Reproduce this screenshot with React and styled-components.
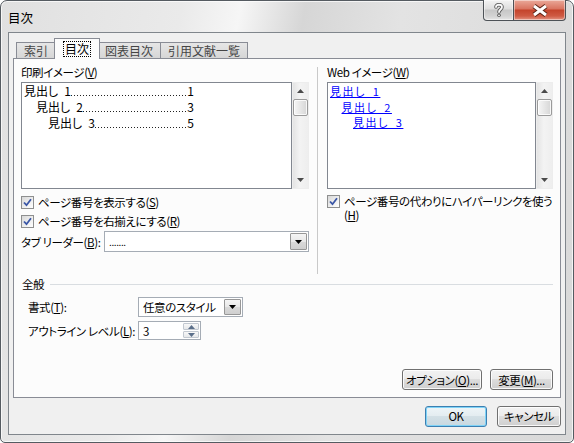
import React from "react";
import styled, { createGlobalStyle } from "styled-components";

const GlobalStyle = createGlobalStyle`
  html, body {
    margin: 0;
    padding: 0;
    background: #ffffff;
  }
  body {
    font-family: "Noto Sans CJK JP", "Liberation Sans", sans-serif;
    font-size: 11.5px;
    letter-spacing: -0.4px;
    color: #000;
  }
  * {
    box-sizing: border-box;
  }
`;

// ウィンドウ枠
const Window = styled.div`
  width: 574px;
  height: 443px;
  display: flex;
  flex-direction: column;
  padding: 0 7px 7px;
  border: 1px solid #555b61;
  border-radius: 7px 7px 5px 5px;
  background: linear-gradient(
    100deg,
    #e0e0e0 0%,
    #eaeaea 28%,
    #f6f6f6 37%,
    #d6d6d6 47%,
    #e3e3e3 62%,
    #d8d8d8 100%
  );
  box-shadow: inset 0 0 0 1px rgba(255, 255, 255, 0.7);
  font-feature-settings: "palt";
`;

const TitleBar = styled.div`
  height: 32px;
  display: flex;
  justify-content: space-between;
  align-items: flex-start;
`;

const Title = styled.span`
  margin-top: 10px;
  font-size: 12.5px;
  letter-spacing: 0;
  line-height: 14px;
`;

const CaptionButtons = styled.div`
  display: flex;
  margin-top: -1px;
`;

const CaptionButton = styled.div`
  width: ${(p) => p.$w}px;
  height: 21px;
  display: flex;
  align-items: center;
  justify-content: center;
  border: 1px solid #4d5257;
  border-top: none;
  border-left: ${(p) => (p.$close ? "none" : "1px solid #4d5257")};
  border-radius: ${(p) => (p.$close ? "0 0 4px 0" : "0 0 0 4px")};
  background: ${(p) =>
    p.$close
      ? "linear-gradient(#eaa99a 0%, #d9735f 45%, #c4432b 50%, #cf5a43 80%, #e49584 100%)"
      : "linear-gradient(#f3f3f3 0%, #dedede 45%, #c7c7c7 50%, #d3d3d3 80%, #e6e6e6 100%)"};
  box-shadow: inset 0 0 0 1px rgba(255, 255, 255, 0.45);
`;

// クライアント領域
const Client = styled.div`
  flex: 1;
  display: flex;
  flex-direction: column;
  background: #f0f0f0;
  border: 1px solid #80868c;
  padding: 0 4px;
`;

const TabStrip = styled.div`
  height: 25px;
  display: flex;
  align-items: flex-end;
  padding-left: 3px;
  position: relative;
  z-index: 1;
`;

const Tab = styled.div`
  height: ${(p) => (p.$active ? 21 : 16)}px;
  padding: ${(p) => (p.$active ? "0 9px" : "0 7px")};
  margin: ${(p) => (p.$active ? "0 -2px -1px -2px" : "0 0 0 -1px")};
  display: flex;
  align-items: center;
  border: 1px solid #898c95;
  border-bottom: none;
  background: ${(p) =>
    p.$active ? "#fcfcfc" : "linear-gradient(#e6e6e6, #d6d6d6)"};
  color: ${(p) => (p.$active ? "#000" : "#454545")};
  position: relative;
  z-index: ${(p) => (p.$active ? 2 : 0)};
  font-size: 12px;
  letter-spacing: 0;
  line-height: 14px;
  &:first-child {
    margin-left: 0;
  }
`;

const FocusText = styled.span`
  outline: 1px dotted #000;
  outline-offset: 0;
  padding: 0 1px;
`;

const Panel = styled.div`
  height: 340px;
  display: flex;
  flex-direction: column;
  border: 1px solid #898c95;
  background: #fcfcfc;
  padding: 6px 7px 7px;
`;

const TopSection = styled.div`
  height: 209px;
  display: flex;
`;

const Column = styled.div`
  width: ${(p) => p.$w}px;
  display: flex;
  flex-direction: column;
`;

const Divider = styled.div`
  width: 1px;
  margin: 2px 9px 0 8px;
  background: #c9c9c9;
`;

const FieldLabel = styled.div`
  height: 14px;
  line-height: 14px;
  margin-bottom: 3px;
  white-space: nowrap;
`;

const Preview = styled.div`
  height: 107px;
  display: flex;
`;

const ListBox = styled.div`
  flex: 1;
  border: 1px solid #828790;
  background: #ffffff;
  padding: 0 2px;
  font-size: 12px;
  letter-spacing: 0;
`;

const TocLine = styled.div`
  width: 170px;
  height: 16px;
  line-height: 16px;
  display: flex;
  padding-left: ${(p) => p.$level * 12}px;
  white-space: nowrap;
`;

// 点線のリーダー
const Leader = styled.span`
  flex: 1;
  margin-right: 1px;
  background: linear-gradient(to right, #222 1px, transparent 1px) 0 12px / 3px 1px repeat-x;
`;

const WebLine = styled.div`
  height: 15.5px;
  line-height: 16px;
  padding-left: ${(p) => p.$level * 11.5}px;
  white-space: nowrap;
`;

const WebLink = styled.span`
  color: #0000ff;
  text-decoration: underline;
  font-size: 11px;
  letter-spacing: 1.5px;
`;

const ScrollBar = styled.div`
  width: 17px;
  display: flex;
  flex-direction: column;
  align-items: center;
  background: linear-gradient(to right, #e4e4e4, #f3f3f3 45%, #eeeeee);
  border: 1px solid #ededed;
`;

const ScrollArrow = styled.div`
  height: 16px;
  display: flex;
  align-items: center;
  justify-content: center;
`;

const ScrollThumb = styled.div`
  width: 15px;
  height: 17px;
  border: 1px solid #9a9a9a;
  border-radius: 2px;
  background: linear-gradient(to right, #f6f6f6, #e6e6e6 50%, #d6d6d6);
  box-shadow: inset 0 0 0 1px rgba(255, 255, 255, 0.8);
`;

const Spacer = styled.div`
  flex: 1;
`;

const CheckRow = styled.div`
  display: flex;
  align-items: ${(p) => (p.$top ? "flex-start" : "center")};
  gap: 4px;
  margin-top: ${(p) => p.$mt}px;
  min-height: 16px;
  line-height: ${(p) => (p.$top ? "14px" : "16px")};
  white-space: nowrap;
`;

const CheckBox = styled.div`
  width: 13px;
  height: 13px;
  flex: none;
  margin-top: ${(p) => (p.$top ? 1 : 0)}px;
  border: 1px solid #8e8f8f;
  background: linear-gradient(135deg, #d8d8d8, #f4f4f4 70%, #ffffff);
  display: flex;
  align-items: center;
  justify-content: center;
`;

const CheckText = styled.div`
  display: flex;
  flex-direction: column;
`;

const LeaderRow = styled.div`
  height: 21px;
  margin-top: 2px;
  display: flex;
  align-items: center;
`;

const InlineLabel = styled.div`
  width: ${(p) => p.$w}px;
  flex: none;
  white-space: nowrap;
  line-height: 14px;
`;

const Combo = styled.div`
  width: ${(p) => (p.$w ? `${p.$w}px` : "auto")};
  flex: ${(p) => (p.$w ? "none" : "1")};
  height: ${(p) => p.$h}px;
  display: flex;
  border: 1px solid #a5acb5;
  background: #ffffff;
  padding: 1px;
`;

const ComboText = styled.div`
  flex: 1;
  padding-left: 3px;
  display: flex;
  align-items: center;
  font-size: ${(p) => (p.$small ? 10 : 11.5)}px;
  line-height: 14px;
  white-space: nowrap;
`;

const DropButton = styled.div`
  width: 17px;
  display: flex;
  align-items: center;
  justify-content: center;
  border: 1px solid #979797;
  border-radius: 1px;
  background: linear-gradient(#f5f5f5, #e8e8e8 50%, #d9d9d9 51%, #cfcfcf);
`;

const SpinButtons = styled.div`
  width: 16px;
  display: flex;
  flex-direction: column;
  gap: 1px;
`;

const SpinHalf = styled.div`
  flex: 1;
  display: flex;
  align-items: center;
  justify-content: center;
  border: 1px solid #c2c8d0;
  border-radius: 1px;
  background: linear-gradient(#f8f8f8, #e6e8ea);
`;

const GroupHeader = styled.div`
  height: 14px;
  margin-top: 3px;
  display: flex;
  align-items: center;
  gap: 6px;
  line-height: 14px;
  padding-left: 1px;
`;

const GroupLine = styled.div`
  flex: 1;
  height: 1px;
  background: #d9dde1;
`;

const FieldRow = styled.div`
  display: flex;
  align-items: center;
  padding-left: 7px;
  margin-top: ${(p) => p.$mt}px;
`;

const ButtonRow = styled.div`
  display: flex;
  justify-content: flex-end;
  align-items: center;
  gap: ${(p) => p.$gap}px;
  height: ${(p) => (p.$h ? `${p.$h}px` : "auto")};
`;

const Button = styled.div`
  width: ${(p) => p.$w}px;
  height: 21px;
  display: flex;
  align-items: center;
  justify-content: center;
  border: 1px solid ${(p) => (p.$default ? "#3c7fb1" : "#707070")};
  border-radius: 3px;
  background: ${(p) =>
    p.$default
      ? "linear-gradient(#eef5f8 0%, #e3ecf0 49%, #d3e0e6 50%, #c8d8e0 100%)"
      : "linear-gradient(#f2f2f2 0%, #ebebeb 49%, #dddddd 50%, #cfcfcf 100%)"};
  box-shadow: ${(p) =>
    p.$default
      ? "inset 0 0 0 1px #7fd3f7"
      : "inset 0 0 0 1px rgba(255,255,255,0.85)"};
  white-space: nowrap;
  line-height: 14px;
`;

const Down = ({ color = "#000" }) => (
  <svg width="7" height="4" viewBox="0 0 7 4">
    <path d="M0 0 H7 L3.5 4 Z" fill={color} />
  </svg>
);

const Up = ({ color = "#000" }) => (
  <svg width="7" height="4" viewBox="0 0 7 4">
    <path d="M0 4 H7 L3.5 0 Z" fill={color} />
  </svg>
);

const Check = () => (
  <svg width="9" height="9" viewBox="0 0 9 9">
    <path d="M1 4.5 L3.5 7.2 L8 1.2" fill="none" stroke="#3a56a6" strokeWidth="1.8" />
  </svg>
);

const Scroller = () => (
  <ScrollBar>
    <ScrollArrow>
      <Up color="#4a4a4a" />
    </ScrollArrow>
    <ScrollThumb />
    <Spacer />
    <ScrollArrow>
      <Down color="#4a4a4a" />
    </ScrollArrow>
  </ScrollBar>
);

// 見出しと全角ではない空白（en space）
const headings = [
  { label: "見出し\u20021", page: "1" },
  { label: "見出し\u20022", page: "3" },
  { label: "見出し\u20023", page: "5" },
];

export default function App() {
  return (
    <>
      <GlobalStyle />
      <Window>
        <TitleBar>
          <Title>目次</Title>
          <CaptionButtons>
            <CaptionButton $w={31}>
              <svg width="10" height="15" viewBox="0 0 10 15">
                <path
                  d="M2 4 C2 1 8 1 8 4 C8 6.5 5 6.5 5 9"
                  fill="none"
                  stroke="#5a5a5a"
                  strokeWidth="3.6"
                  strokeLinecap="round"
                />
                <path
                  d="M2 4 C2 1 8 1 8 4 C8 6.5 5 6.5 5 9"
                  fill="none"
                  stroke="#fafafa"
                  strokeWidth="1.8"
                  strokeLinecap="round"
                />
                <circle cx="5" cy="12.3" r="1.8" fill="#5a5a5a" />
                <circle cx="5" cy="12.3" r="0.9" fill="#fafafa" />
              </svg>
            </CaptionButton>
            <CaptionButton $w={52} $close>
              <svg width="18" height="13" viewBox="0 0 18 13">
                <path d="M3 2 L15 11 M15 2 L3 11" stroke="#5a2416" strokeWidth="5" />
                <path d="M3 2 L15 11 M15 2 L3 11" stroke="#ffffff" strokeWidth="3" />
              </svg>
            </CaptionButton>
          </CaptionButtons>
        </TitleBar>

        <Client>
          <TabStrip>
            <Tab>索引</Tab>
            <Tab $active>
              <FocusText>目次</FocusText>
            </Tab>
            <Tab>図表目次</Tab>
            <Tab>引用文献一覧</Tab>
          </TabStrip>

          <Panel>
            <TopSection>
              <Column $w={288}>
                <FieldLabel>
                  印刷イメージ(<u>V</u>)
                </FieldLabel>
                <Preview>
                  <ListBox>
                    {headings.map((h, i) => (
                      <TocLine key={h.label} $level={i}>
                        <span>{h.label}</span>
                        <Leader />
                        <span>{h.page}</span>
                      </TocLine>
                    ))}
                  </ListBox>
                  <Scroller />
                </Preview>
                <CheckRow $mt={5}>
                  <CheckBox>
                    <Check />
                  </CheckBox>
                  <span>
                    ページ番号を表示する(<u>S</u>)
                  </span>
                </CheckRow>
                <CheckRow $mt={3}>
                  <CheckBox>
                    <Check />
                  </CheckBox>
                  <span>
                    ページ番号を右揃えにする(<u>R</u>)
                  </span>
                </CheckRow>
                <LeaderRow>
                  <InlineLabel $w={83}>
                    タブ リーダー(<u>B</u>):
                  </InlineLabel>
                  <Combo $h={21}>
                    <ComboText $small>.......</ComboText>
                    <DropButton>
                      <Down />
                    </DropButton>
                  </Combo>
                </LeaderRow>
              </Column>

              <Divider />

              <Column $w={226}>
                <FieldLabel>
                  Web イメージ(<u>W</u>)
                </FieldLabel>
                <Preview>
                  <ListBox>
                    {headings.map((h, i) => (
                      <WebLine key={h.label} $level={i}>
                        <WebLink>{h.label}</WebLink>
                      </WebLine>
                    ))}
                  </ListBox>
                  <Scroller />
                </Preview>
                <CheckRow $mt={5} $top>
                  <CheckBox $top>
                    <Check />
                  </CheckBox>
                  <CheckText>
                    <span>ページ番号の代わりにハイパーリンクを使う</span>
                    <span>
                      (<u>H</u>)
                    </span>
                  </CheckText>
                </CheckRow>
              </Column>
            </TopSection>

            <GroupHeader>
              <span>全般</span>
              <GroupLine />
            </GroupHeader>
            <FieldRow $mt={6}>
              <InlineLabel $w={110}>
                書式(<u>T</u>):
              </InlineLabel>
              <Combo $w={105} $h={20}>
                <ComboText>任意のスタイル</ComboText>
                <DropButton>
                  <Down />
                </DropButton>
              </Combo>
            </FieldRow>
            <FieldRow $mt={4}>
              <InlineLabel $w={110}>
                アウトライン レベル(<u>L</u>):
              </InlineLabel>
              <Combo $w={63} $h={19}>
                <ComboText>3</ComboText>
                <SpinButtons>
                  <SpinHalf>
                    <Up color="#5b6f8a" />
                  </SpinHalf>
                  <SpinHalf>
                    <Down color="#5b6f8a" />
                  </SpinHalf>
                </SpinButtons>
              </Combo>
            </FieldRow>

            <Spacer />
            <ButtonRow $gap={8}>
              <Button $w={80}>
                オプション(<u>O</u>)...
              </Button>
              <Button $w={63}>
                変更(<u>M</u>)...
              </Button>
            </ButtonRow>
          </Panel>

          <ButtonRow $gap={10} $h={36}>
            <Button $w={62} $default>
              OK
            </Button>
            <Button $w={64}>キャンセル</Button>
          </ButtonRow>
        </Client>
      </Window>
    </>
  );
}
